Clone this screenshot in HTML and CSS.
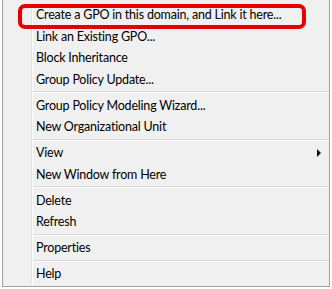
FILE: index.html
```html
<!DOCTYPE html>
<html lang="en">
<head>
    <meta charset="UTF-8">
    <title>Context Menu</title>
    <link rel="stylesheet" href="styles.css">
</head>
<body>
    <!-- Context menu for a domain node -->
    <div class="menu">
        <div class="menu-list">
            <div class="item">Create a GPO in this domain, and Link it here...</div>
            <div class="item">Link an Existing GPO...</div>
            <div class="item">Block Inheritance</div>
            <div class="item">Group Policy Update...</div>
            <div class="sep"></div>
            <div class="item">Group Policy Modeling Wizard...</div>
            <div class="item">New Organizational Unit</div>
            <div class="sep"></div>
            <div class="item">View <span class="arrow"></span></div>
            <div class="item">New Window from Here</div>
            <div class="sep"></div>
            <div class="item">Delete</div>
            <div class="item">Refresh</div>
            <div class="sep"></div>
            <div class="item">Properties</div>
            <div class="sep"></div>
            <div class="item">Help</div>
        </div>
        <!-- Red highlight around the first entry -->
        <div class="highlight"></div>
    </div>
</body>
</html>
```

FILE: styles.css
```css
body {
    margin: 0;
    background-color: #fff;
    font-family: Lato, sans-serif;
}

.menu {
    position: relative;
    margin-left: 2px;
    padding: 4px 0 1px 28px;
    width: 298px;
    background-color: #f0f0f0;
    border: 1px solid #a0a0a0;
    border-top: none;
}

.menu-list {
    border-left: 1px solid #e2e2e2;
    box-shadow: inset 1px 0 0 #fff;
}

.item {
    display: flex;
    align-items: center;
    height: 21.5px;
    padding-left: 4px;
    padding-right: 8px;
    font-size: 12.5px;
    letter-spacing: -0.2px;
    color: #000;
    white-space: nowrap;
}

.sep {
    height: 0;
    margin: 1.25px 0 1.25px 1px;
    border-top: 1px solid #d7d7d7;
    border-bottom: 1px solid #fff;
}

.arrow {
    margin-left: auto;
    width: 0;
    height: 0;
    border-top: 4px solid transparent;
    border-bottom: 4px solid transparent;
    border-left: 4px solid #111;
}

.highlight {
    position: absolute;
    left: 15px;
    top: 4px;
    width: 280px;
    height: 17px;
    border: 4px solid #e60000;
    border-radius: 7px;
}
```
